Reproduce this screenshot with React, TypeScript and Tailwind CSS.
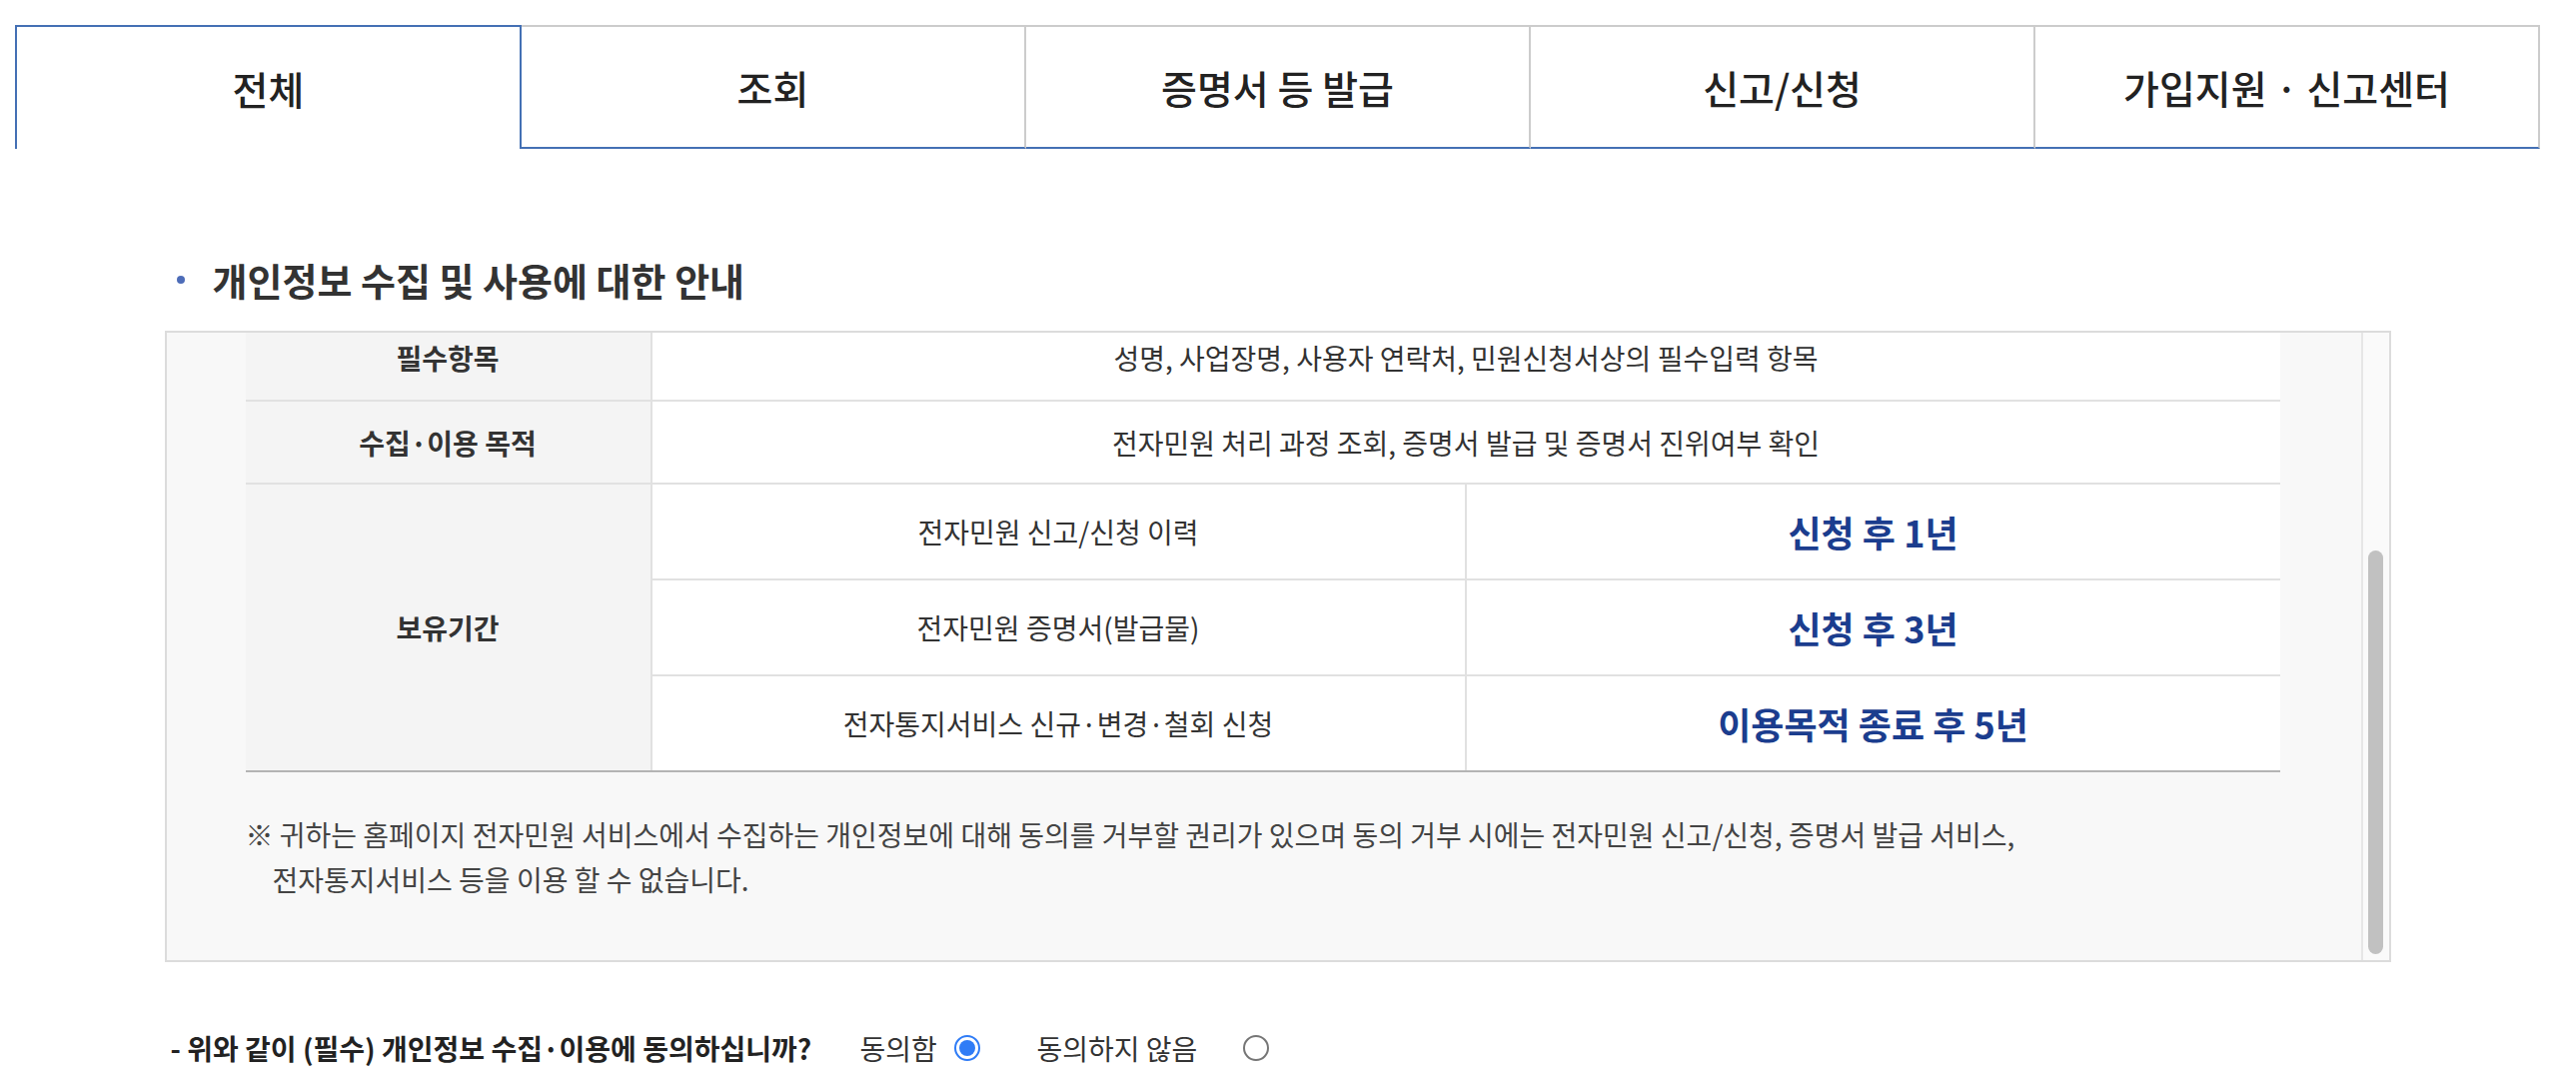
import type { ReactNode } from "react";

const tabs = ["전체", "조회", "증명서 등 발급", "신고/신청", "가입지원 · 신고센터"];

const periods = [
  { label: "전자민원 신고/신청 이력", value: "신청 후 1년" },
  { label: "전자민원 증명서(발급물)", value: "신청 후 3년" },
  { label: "전자통지서비스 신규·변경·철회 신청", value: "이용목적 종료 후 5년" },
];

function HeadCell({ children, className = "" }: { children: ReactNode; className?: string }) {
  return (
    <div
      className={`flex w-[407px] shrink-0 justify-center border-r-2 border-[#e1e1e1] bg-[#f4f4f4] text-[28px] font-bold text-[#333] ${className}`}
    >
      {children}
    </div>
  );
}

function Radio({ checked }: { checked: boolean }) {
  return checked ? (
    <span className="flex h-[26px] w-[26px] items-center justify-center rounded-full border-[2px] border-[#2f7cf6] bg-white">
      <span className="h-[16px] w-[16px] rounded-full bg-[#2f7cf6]" />
    </span>
  ) : (
    <span className="h-[26px] w-[26px] rounded-full border-[2px] border-[#767676] bg-white" />
  );
}

export default function App() {
  return (
    <div className="min-h-screen w-[2578px] bg-white font-['Noto_Sans_CJK_KR','Noto_Sans_KR',sans-serif] text-[#333]">
      <div className="ml-[15px] w-[2527px] pt-[25px]">
        {/* tabs */}
        <div className="flex h-[124px]">
          {tabs.map((t, i) =>
            i === 0 ? (
              <div
                key={t}
                className="flex flex-1 items-center justify-center border-x-2 border-t-2 border-[#4470b4] bg-white text-[39px] font-medium text-[#222]"
              >
                {t}
              </div>
            ) : (
              <div
                key={t}
                className="flex flex-1 items-center justify-center border-t-2 border-r-2 border-b-2 border-t-[#cccccc] border-r-[#cccccc] border-b-[#4470b4] bg-white text-[39px] font-medium text-[#222]"
              >
                {t}
              </div>
            )
          )}
        </div>

        <div className="mx-auto w-[2228px]">
          {/* title */}
          <div className="mt-[106px] flex items-center pl-[12px]">
            <span className="h-[8px] w-[8px] rounded-full bg-[#4d6cb8]" />
            <h2 className="ml-[28px] text-[38px] font-bold leading-[50px] text-[#333]">
              개인정보 수집 및 사용에 대한 안내
            </h2>
          </div>

          {/* box */}
          <div className="mt-[26px] flex h-[632px] border-2 border-[#dcdcdc] bg-[#f8f8f8]">
            <div className="flex-1 overflow-hidden pl-[79px]">
              <div className="w-[2036px]">
                <div className="flex h-[69px] border-b-2 border-[#e1e1e1]">
                  <HeadCell className="items-start pt-[6px] leading-[38px]">필수항목</HeadCell>
                  <div className="flex flex-1 justify-center bg-white pt-[6px] text-[28px] leading-[38px]">
                    성명, 사업장명, 사용자 연락처, 민원신청서상의 필수입력 항목
                  </div>
                </div>
                <div className="flex h-[83px] border-b-2 border-[#e1e1e1]">
                  <HeadCell className="items-center">수집·이용 목적</HeadCell>
                  <div className="flex flex-1 items-center justify-center bg-white text-[28px]">
                    전자민원 처리 과정 조회, 증명서 발급 및 증명서 진위여부 확인
                  </div>
                </div>
                <div className="flex border-b-2 border-[#b4b4b4]">
                  <HeadCell className="items-center">보유기간</HeadCell>
                  <div className="flex flex-1 flex-col">
                    {periods.map((p, i) => (
                      <div
                        key={p.label}
                        className={`flex ${i < periods.length - 1 ? "h-[96px] border-b-2 border-[#e1e1e1]" : "h-[94px]"}`}
                      >
                        <div className="flex w-[815px] shrink-0 items-center justify-center border-r-2 border-[#e1e1e1] bg-white text-[28px]">
                          {p.label}
                        </div>
                        <div className="flex flex-1 items-center justify-center bg-white text-[36px] font-bold text-[#1b3d8e]">
                          {p.value}
                        </div>
                      </div>
                    ))}
                  </div>
                </div>

                <div className="pt-[40px] text-[28px] leading-[45px] text-[#444]">
                  <p>
                    ※ 귀하는 홈페이지 전자민원 서비스에서 수집하는 개인정보에 대해 동의를 거부할 권리가 있으며 동의 거부 시에는 전자민원 신고/신청, 증명서 발급 서비스,
                  </p>
                  <p className="pl-[27px]">전자통지서비스 등을 이용 할 수 없습니다.</p>
                </div>
              </div>
            </div>

            {/* scrollbar */}
            <div className="flex w-[28px] shrink-0 flex-col border-l-2 border-[#e6e6e6] bg-[#fafafa] pt-[218px]">
              <div className="mx-auto h-[404px] w-[15px] rounded-full bg-[#c1c1c1]" />
            </div>
          </div>

          {/* consent */}
          <div className="mt-[68px] flex h-[36px] items-center pl-[6px] text-[28px]">
            <span className="w-[690px] shrink-0 font-bold text-[#222]">
              - 위와 같이 (필수) 개인정보 수집·이용에 동의하십니까?
            </span>
            <span className="w-[94px] shrink-0 text-[#333]">동의함</span>
            <Radio checked />
            <span className="ml-[57px] w-[206px] shrink-0 text-[#333]">동의하지 않음</span>
            <Radio checked={false} />
          </div>
        </div>
      </div>
    </div>
  );
}
